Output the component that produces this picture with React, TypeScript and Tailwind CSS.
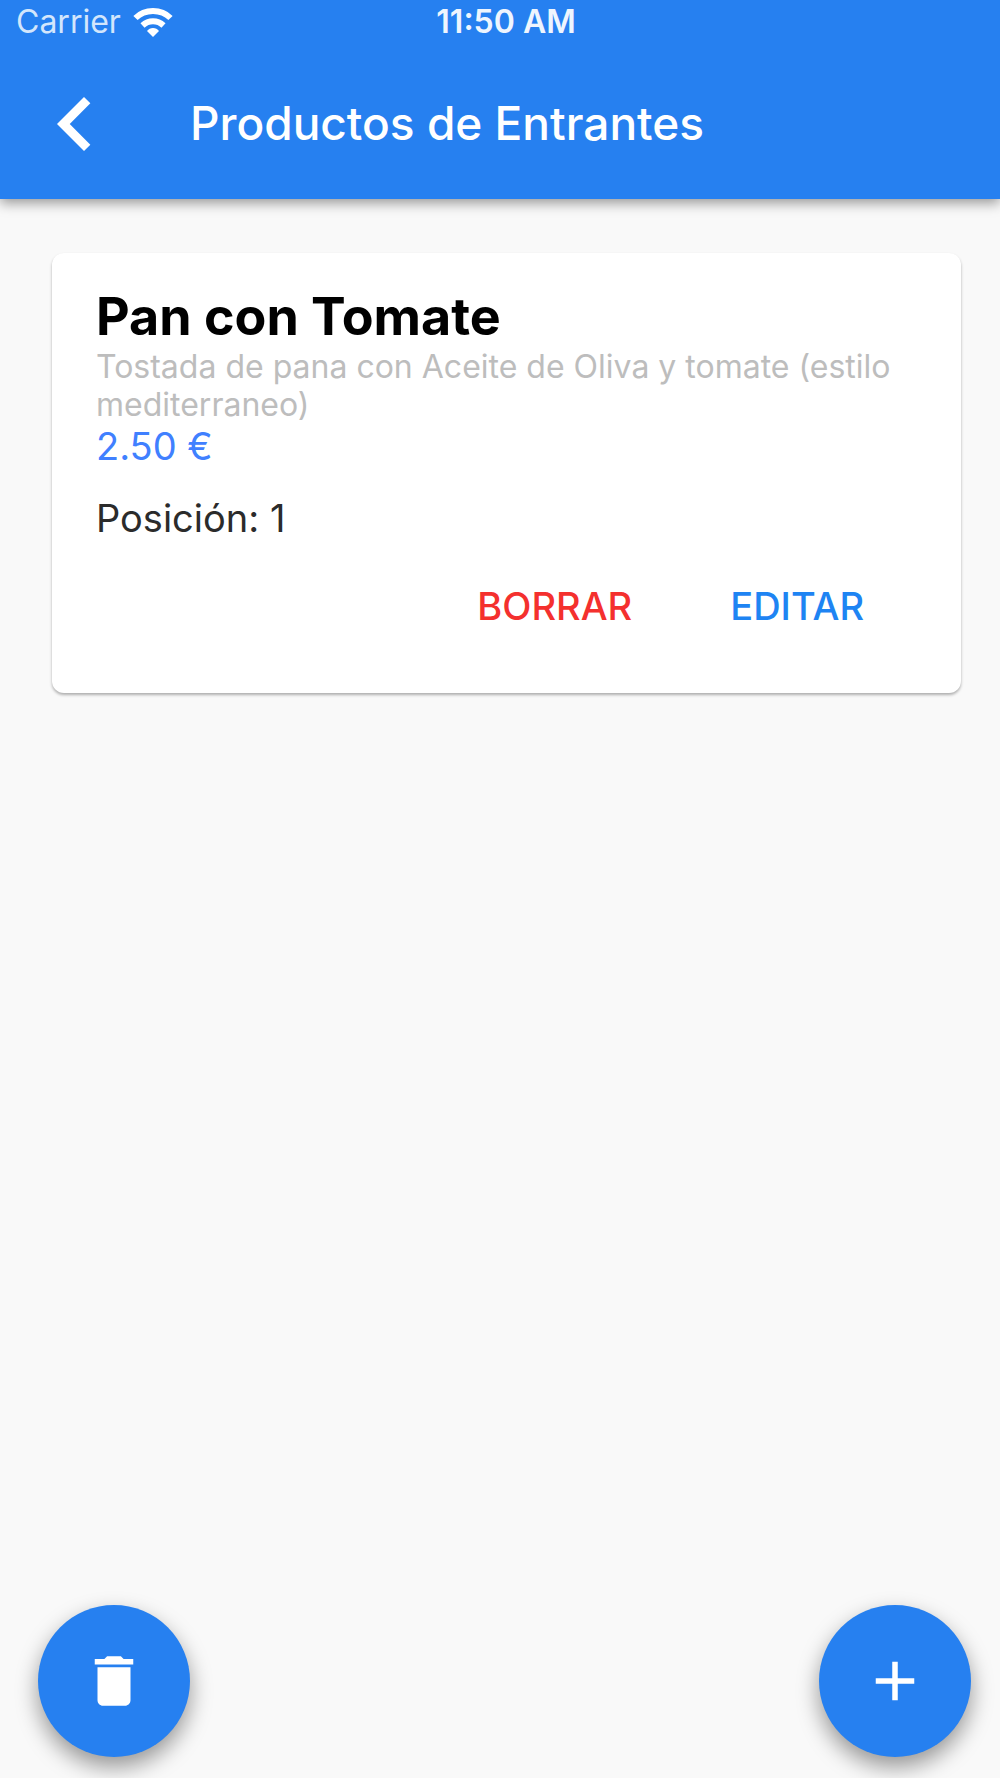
import { MdAdd, MdChevronLeft, MdDelete } from "react-icons/md";

const product = {
    name: "Pan con Tomate",
    description: "Tostada de pana con Aceite de Oliva y tomate (estilo mediterraneo)",
    price: "2.50 €",
    position: 1,
};

function WifiIcon() {
    return (
        <svg viewBox="0 0 40 30" className="h-[30px] w-10" fill="none" stroke="currentColor" strokeWidth="6" aria-hidden="true">
            <path d="M2.500 11C7 6.500 13 4 20 4s13 2.500 17.500 7" />
            <path d="M9.500 18.500c2.900-2.700 6.500-4.200 10.500-4.200s7.600 1.500 10.500 4.200" />
            <path d="M14 24c1.500-1.900 3.500-3 6-3s4.500 1.100 6 3L20 30z" fill="currentColor" stroke="none" />
        </svg>
    );
}

export default function App() {
    return (
        <div className="flex min-h-screen flex-col bg-[#f9f9f9] font-['Inter',sans-serif]">
            <header className="bg-[#2680f0] text-white shadow-[0_4px_12px_rgba(0,0,0,0.4)]">
                <div className="grid h-11 grid-cols-3 items-center pr-1 pl-4 text-[32px] leading-none">
                    <div className="flex items-center gap-3">
                        <span className="text-[#d3e6fc]">Carrier</span>
                        <WifiIcon />
                    </div>
                    <span className="text-center font-semibold whitespace-nowrap text-[#eef5fe]">11:50 AM</span>
                </div>
                <div className="flex h-[155px] items-center pt-1 pl-[21px]">
                    <button type="button" aria-label="Volver" className="mr-[61px] flex size-[108px] items-center justify-center">
                        <MdChevronLeft className="size-[108px]" />
                    </button>
                    <h1 className="text-[46px] font-medium">Productos de Entrantes</h1>
                </div>
            </header>

            <main className="flex-1 pt-[54px] pr-[39px] pl-[52px]">
                <article className="rounded-xl bg-white px-[44px] pt-[33px] pb-[61px] shadow-[0_2px_3px_rgba(0,0,0,0.3)]">
                    <h2 className="text-[52px] leading-[62px] font-bold text-black">{product.name}</h2>
                    <p className="text-[32px] leading-[38px] text-[#bdbdbd]">{product.description}</p>
                    <p className="text-[38px] leading-[44px] text-[#4080ff]">{product.price}</p>
                    <p className="mt-7 text-[38px] leading-[44px] text-[#2b2b2b]">Posición: {product.position}</p>
                    <div className="mt-10 flex justify-end gap-[98px] pr-[53px] text-[38px] leading-[52px] font-medium">
                        <button type="button" className="text-[#f4302e]">BORRAR</button>
                        <button type="button" className="text-[#1e84f3]">EDITAR</button>
                    </div>
                </article>
            </main>

            <footer className="flex justify-between pr-[29px] pb-[21px] pl-[38px]">
                <button
                    type="button"
                    aria-label="Eliminar"
                    className="flex size-[152px] items-center justify-center rounded-full bg-[#2680f0] text-white shadow-[0_10px_22px_rgba(0,0,0,0.4)]"
                >
                    <MdDelete className="size-[66px]" />
                </button>
                <button
                    type="button"
                    aria-label="Añadir"
                    className="flex size-[152px] items-center justify-center rounded-full bg-[#2680f0] text-white shadow-[0_10px_22px_rgba(0,0,0,0.4)]"
                >
                    <MdAdd className="size-[66px]" />
                </button>
            </footer>
        </div>
    );
}
